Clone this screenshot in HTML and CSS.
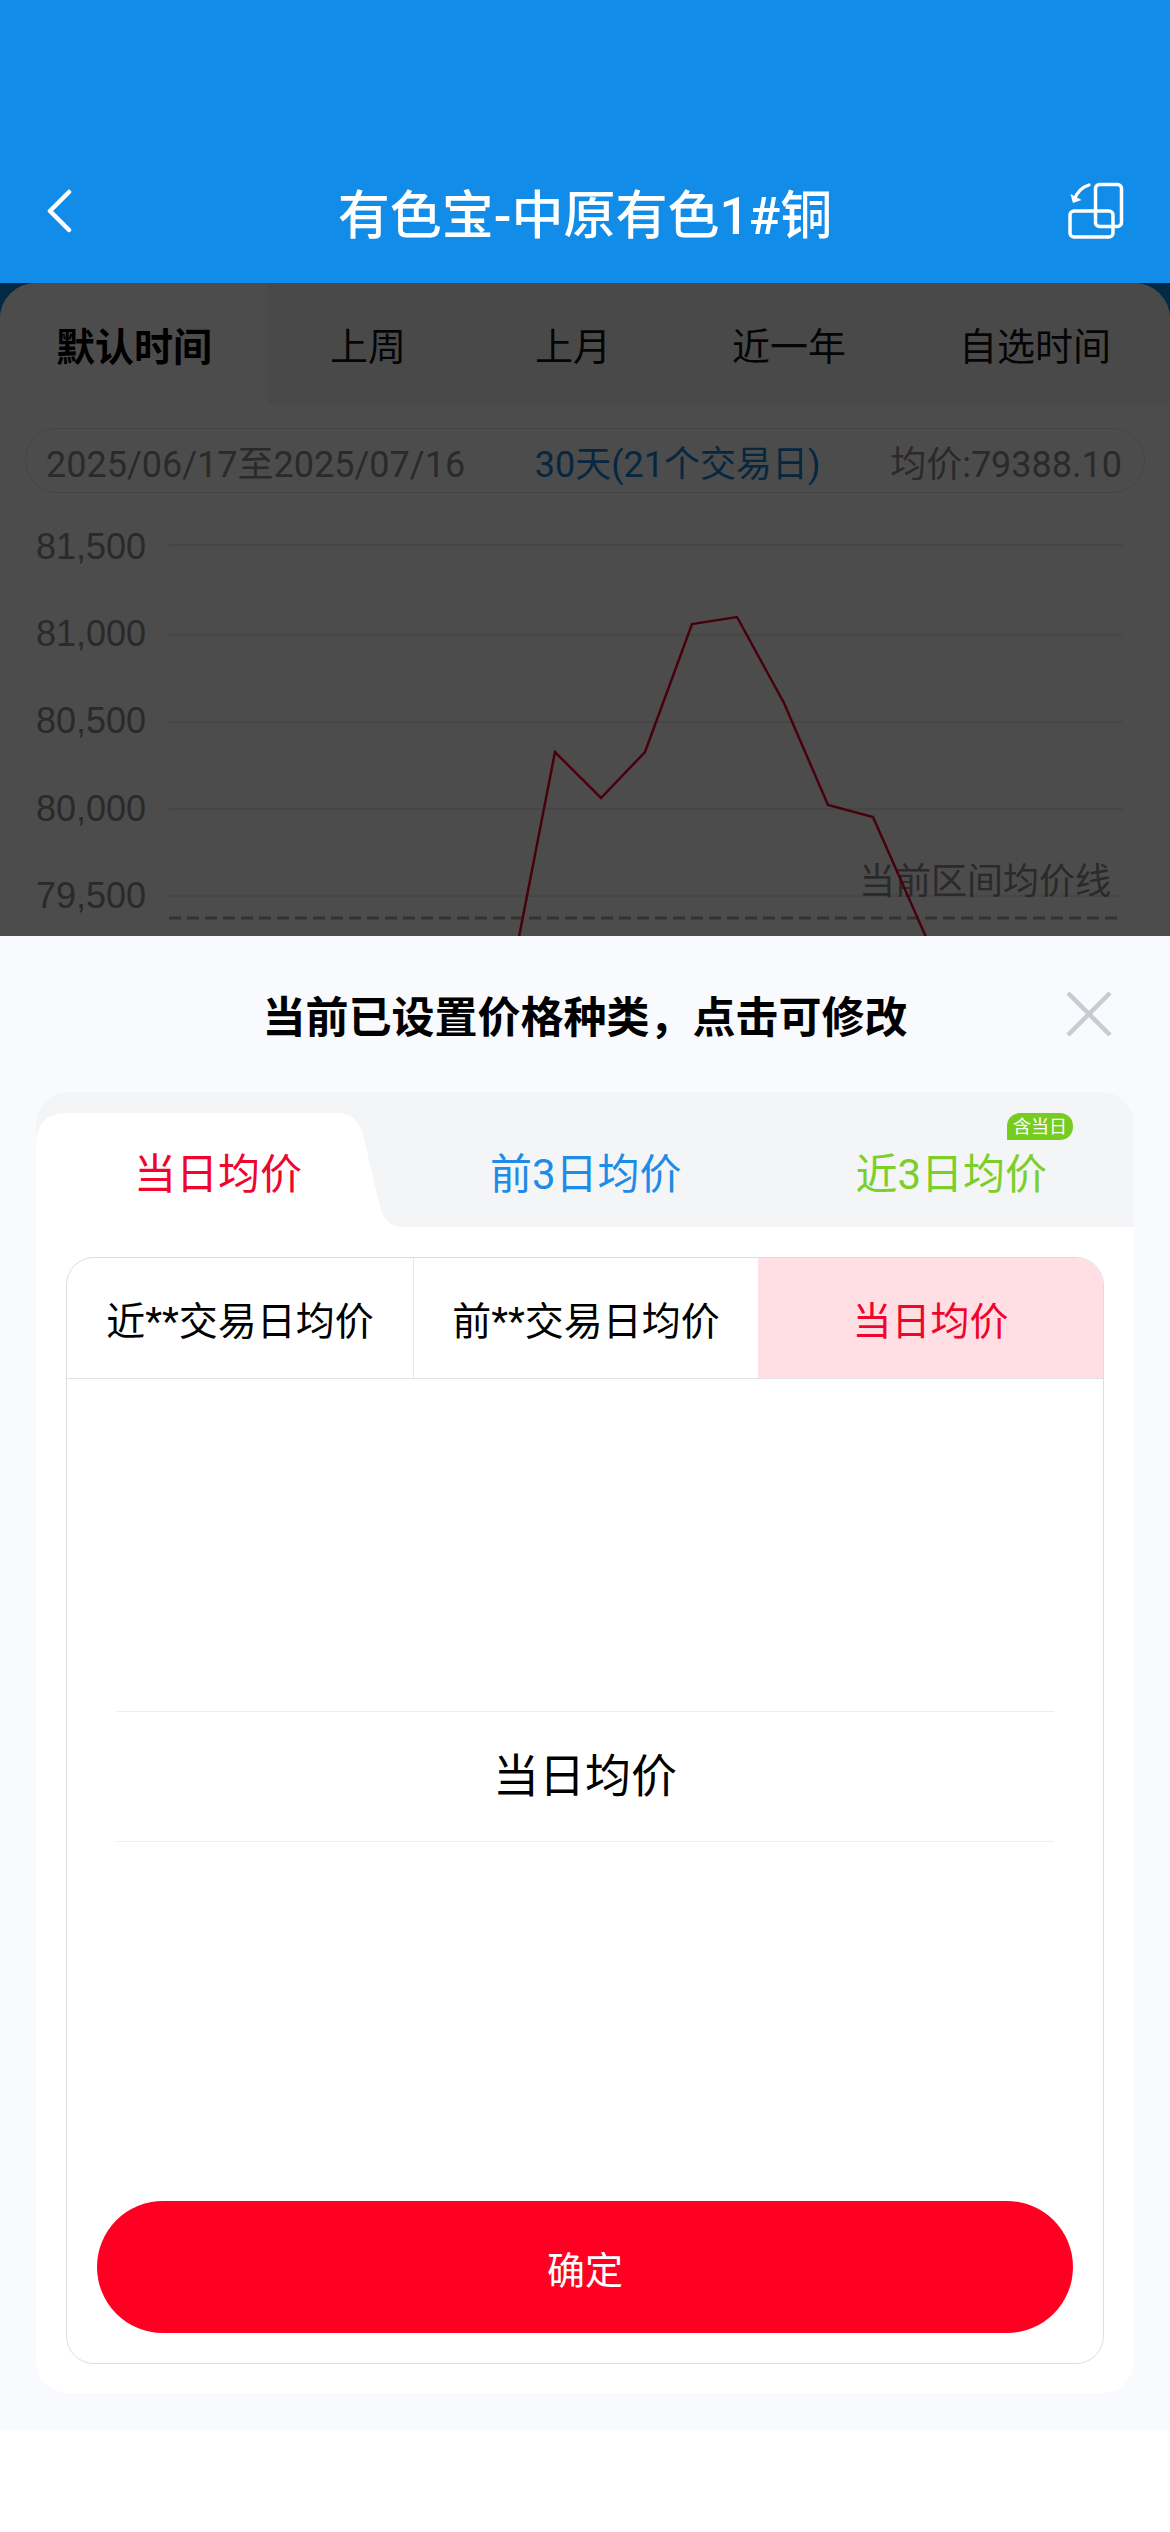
FILE: index.html
```html
<!DOCTYPE html>
<html lang="zh-CN">
<head>
    <meta charset="UTF-8">
    <meta name="viewport" content="width=device-width, initial-scale=1.0">
    <title>有色宝-中原有色1#铜</title>
    <link rel="stylesheet" href="styles.css">
</head>
<body>
    <div class="screen">
        <header class="nav">
            <svg class="nav-back" width="26" height="44" viewBox="0 0 26 44">
                <path d="M23 3 L4 22 L23 41" fill="none" stroke="#fff" stroke-width="4.5" stroke-linecap="round" stroke-linejoin="round"/>
            </svg>
            <h1 class="nav-title">有色宝-中原有色1#铜</h1>
            <svg class="nav-switch" width="56" height="58" viewBox="0 0 56 58">
                <rect x="27.5" y="2.5" width="26" height="42" rx="4" fill="none" stroke="#fff" stroke-width="3.5"/>
                <rect x="2" y="29" width="43" height="26" rx="4" fill="none" stroke="#fff" stroke-width="3.5"/>
                <path d="M21 3 C14 5 9 10 6 18" fill="none" stroke="#fff" stroke-width="3.2" stroke-linecap="round"/>
                <path d="M2.5 12 L5 21 L13.5 18 Z" fill="#fff"/>
            </svg>
        </header>

        <main class="content">
            <div class="card">
                <div class="range-tabs">
                    <div class="range-tab active">默认时间</div>
                    <div class="range-tab">上周</div>
                    <div class="range-tab">上月</div>
                    <div class="range-tab">近一年</div>
                    <div class="range-tab">自选时间</div>
                </div>
                <div class="range-info">
                    <span>2025/06/17至2025/07/16</span>
                    <span class="range-days">30天(21个交易日)</span>
                    <span>均价:79388.10</span>
                </div>
                <svg class="chart" width="1170" height="444" viewBox="0 510 1170 444">
                    <g stroke="#e2e4ea" stroke-width="1.5">
                        <line x1="169" y1="544" x2="1123" y2="544"/>
                        <line x1="169" y1="634" x2="1123" y2="634"/>
                        <line x1="169" y1="721" x2="1123" y2="721"/>
                        <line x1="169" y1="808" x2="1123" y2="808"/>
                        <line x1="169" y1="895" x2="1123" y2="895"/>
                    </g>
                    <g class="chart-label">
                        <text x="36" y="558">81,500</text>
                        <text x="36" y="645">81,000</text>
                        <text x="36" y="732">80,500</text>
                        <text x="36" y="820">80,000</text>
                        <text x="36" y="907">79,500</text>
                    </g>
                    <text class="chart-legend" x="859" y="893">当前区间均价线</text>
                    <line x1="169" y1="917" x2="1118" y2="917" stroke="#a8a8a8" stroke-width="3" stroke-dasharray="12 6"/>
                    <polyline points="519,936 555,751 601,797 645,751 692,623 737,616 784,702 828,804 873,816 926,936" fill="none" stroke="#f0002d" stroke-width="2.5"/>
                </svg>
            </div>
        </main>

        <div class="mask"></div>

        <section class="sheet">
            <div class="sheet-head">
                <div class="sheet-title">当前已设置价格种类，点击可修改</div>
                <svg class="sheet-close" width="46" height="44" viewBox="0 0 46 44">
                    <path d="M2 1 L44 43 M44 1 L2 43" stroke="#c8cbd1" stroke-width="4.5" fill="none"/>
                </svg>
            </div>

            <div class="price-card">
                <div class="price-tabs">
                    <div class="price-tab active">当日均价</div>
                    <div class="price-tab blue">前3日均价</div>
                    <div class="price-tab green">近3日均价<span class="badge">含当日</span></div>
                </div>
                <div class="price-panel">
                    <div class="panel-box">
                        <div class="type-tabs">
                            <div class="type-tab">近**交易日均价</div>
                            <div class="type-tab">前**交易日均价</div>
                            <div class="type-tab selected">当日均价</div>
                        </div>
                        <div class="picker">
                            <div class="picker-item">当日均价</div>
                        </div>
                        <button class="confirm" type="button">确定</button>
                    </div>
                </div>
            </div>
            <div class="safe-area"></div>
        </section>
    </div>
</body>
</html>
```

FILE: styles.css
```css
body {
    margin: 0;
    font-family: Roboto, "Noto Sans CJK SC", sans-serif;
    background: #ffffff;
    color: #000000;
}

.screen {
    position: relative;
    width: 1170px;
    height: 2532px;
    overflow: hidden;
    background: #118de9;
}

/* top bar */
.nav {
    position: relative;
    z-index: 3;
    height: 106px;
    padding: 158px 46px 19px;
    display: grid;
    grid-template-columns: 1fr auto 1fr;
    align-items: center;
    background: #118de9;
}

.nav-title {
    margin: 0;
    font-size: 52px;
    font-weight: 500;
    color: #ffffff;
}

.nav-switch {
    justify-self: end;
}

/* page behind the sheet */
.card {
    height: 653px;
    overflow: hidden;
    background: #ffffff;
    border-radius: 36px 36px 0 0;
}

.range-tabs {
    display: grid;
    grid-template-columns: 268px 200px 210px 222px 270px;
    height: 121px;
}

.range-tab {
    display: flex;
    align-items: center;
    justify-content: center;
    font-size: 38px;
    color: #111111;
    background: #f6f6f6;
}

.range-tab.active {
    font-weight: 700;
    font-size: 39px;
    color: #000000;
    background: #ffffff;
}

.range-info {
    display: flex;
    justify-content: space-between;
    align-items: center;
    box-sizing: border-box;
    height: 65px;
    margin: 24px 25px 0;
    padding: 0 22px 0 20px;
    border: 1.5px solid #e4e4e4;
    border-radius: 33px;
    font-size: 36px;
    color: #8c8c8c;
}

.range-days {
    color: #1a84d8;
}

.chart {
    display: block;
    margin-top: 18px;
}

.chart-label {
    font-family: "Liberation Sans", sans-serif;
    font-size: 36px;
    fill: #8c8c8c;
}

.chart-legend {
    font-size: 36px;
    fill: #8c8c8c;
}

.mask {
    position: absolute;
    left: 0;
    right: 0;
    top: 283px;
    bottom: 0;
    z-index: 1;
    background: rgba(0, 0, 0, 0.7);
}

/* bottom sheet */
.sheet {
    position: absolute;
    left: 0;
    right: 0;
    bottom: 0;
    z-index: 2;
    background: #f9fafe;
}

.sheet-head {
    display: grid;
    grid-template-columns: 1fr auto 1fr;
    align-items: center;
    height: 156px;
    padding: 0 58px 0 36px;
    box-sizing: border-box;
}

.sheet-title {
    grid-column: 2;
    margin-left: 22px;
    font-size: 43px;
    font-weight: 700;
}

.sheet-close {
    justify-self: end;
}

.price-card {
    margin: 0 36px 37px;
    background: #ffffff;
    border-radius: 32px;
    overflow: hidden;
}

.price-tabs {
    display: flex;
    height: 135px;
    padding-top: 21px;
    box-sizing: border-box;
    background: #f4f5f7;
}

.price-tab {
    position: relative;
    flex: 1;
    display: flex;
    align-items: center;
    justify-content: center;
    font-size: 42px;
}

.price-tab.active {
    flex: none;
    width: 367px;
    padding-right: 3px;
    box-sizing: border-box;
    color: #f0052d;
    background: #ffffff;
    clip-path: path("M0 114 V32 Q0 0 32 0 H300 C318 0 325 10 329 30 L343 90 C346 106 354 114 367 114 Z");
}

.price-tab.blue {
    color: #1e8ce6;
}

.price-tab.green {
    color: #7ccf29;
}

.badge {
    position: absolute;
    top: 0;
    right: 61px;
    width: 66px;
    height: 27px;
    border-radius: 13px 13px 13px 0;
    background: #76cc1f;
    color: #ffffff;
    font-size: 18px;
    line-height: 27px;
    text-align: center;
}

.price-panel {
    padding: 30px 30px 29px;
}

.panel-box {
    border: 1.5px solid #dddddd;
    border-radius: 28px;
    overflow: hidden;
}

.type-tabs {
    display: grid;
    grid-template-columns: 346px 345px 1fr;
    height: 120px;
    border-bottom: 1.5px solid #e2e2e2;
}

.type-tab {
    display: flex;
    align-items: center;
    justify-content: center;
    font-size: 39px;
    border-left: 1.5px solid #e6e6e6;
}

.type-tab:first-child {
    border-left: none;
}

.type-tab.selected {
    color: #f0052d;
    background: #ffdfe4;
    border-left: none;
}

.picker {
    display: flex;
    flex-direction: column;
    justify-content: center;
    height: 794px;
    padding: 0 49px;
}

.picker-item {
    height: 131px;
    line-height: 129px;
    box-sizing: border-box;
    border-top: 1.5px solid #eeeeee;
    border-bottom: 1.5px solid #eeeeee;
    text-align: center;
    font-size: 46px;
}

.confirm {
    display: block;
    width: 976px;
    height: 132px;
    margin: 28px 30px 30px;
    border: none;
    border-radius: 66px;
    background: #ff0022;
    color: #ffffff;
    font-family: inherit;
    font-size: 38px;
}

.safe-area {
    height: 102px;
    background: #ffffff;
}
```
